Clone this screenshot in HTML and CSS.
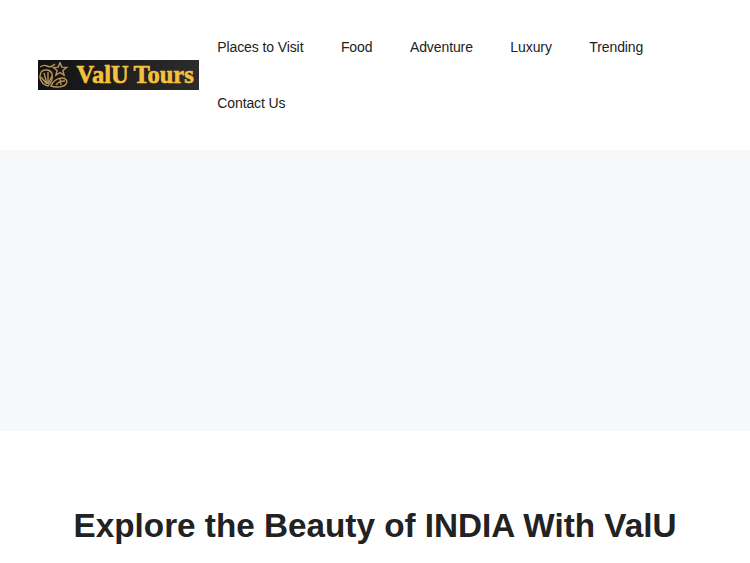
FILE: index.html
```html
<!DOCTYPE html>
<html lang="en">
<head>
    <meta charset="UTF-8">
    <meta name="viewport" content="width=device-width, initial-scale=1.0">
    <title>ValU Tours</title>
    <link rel="stylesheet" href="styles.css">
</head>
<body>
    <header class="site-header">
        <a class="logo" href="#">
            <svg class="logo-icon" width="30" height="26" viewBox="0 0 30 26" fill="none" stroke="#b8935a" stroke-width="1.4">
                <path d="M1 5c3-2 5-2 7-1s5 1 8-2"/>
                <path d="M21 .5l1.800 4.600 4.900.2-3.800 3.100 1.200 4.800-4.100-2.700-4.100 2.700 1.200-4.800-3.800-3.100 4.900-.2z"/>
                <path d="M3 9c4-2 9-1 10 3 1 4-1 9-4 12-4-1-7-4-8-8 0-3 0-5 2-7z"/>
                <path d="M5 11l3 11M9 10l0 12M2 15l6 7M13 14l-4 8"/>
                <path d="M12 24c1-4 6-8 11-8 4 0 6 3 4 6-2 3-10 4-15 2z"/>
                <path d="M17 23c2-3 5-4 9-4M21 17l1 6"/>
            </svg>
            <span class="logo-text">ValU Tours</span>
        </a>
        <nav class="main-nav">
            <a href="#">Places to Visit</a>
            <a href="#">Food</a>
            <a href="#">Adventure</a>
            <a href="#">Luxury</a>
            <a href="#">Trending</a>
            <a href="#">Contact Us</a>
        </nav>
    </header>
    <div class="hero"></div>
    <main class="intro">
        <h1>Explore the Beauty of INDIA With ValU</h1>
    </main>
</body>
</html>
```

FILE: styles.css
```css
* {
    box-sizing: border-box;
}
html, body {
    height: 100%;
}
body {
    margin: 0;
    background-color: #fff;
    color: #222;
    font-family: Helvetica, "Liberation Sans", Arial, sans-serif;
    overflow: hidden;
}
a {
    color: inherit;
    text-decoration: none;
}
.site-header {
    display: flex;
    align-items: center;
    height: 150px;
    padding: 19px 37.5px;
}
.logo {
    flex: none;
    display: flex;
    align-items: center;
    width: 161px;
    height: 30px;
    padding-left: 1.500px;
    background: linear-gradient(90deg, #121212, #2c2c2c);
}
.logo-icon {
    flex: none;
}
.logo-text {
    margin-left: 7.500px;
    font-family: "Liberation Serif", serif;
    font-size: 24.5px;
    line-height: 28px;
    font-weight: 700;
    word-spacing: -1px;
    white-space: nowrap;
    color: #f3c13c;
    -webkit-text-stroke: 0.6px #f3c13c;
}
.main-nav {
    display: flex;
    flex-wrap: wrap;
    width: 500px;
}
.main-nav a {
    padding: 20px 18.75px;
    font-size: 14px;
    line-height: 16px;
    letter-spacing: -0.1px;
}
.hero {
    height: 281px;
    background-color: #f7f8fa;
}
.intro {
    padding-top: 76px;
    text-align: center;
}
h1 {
    margin: 0;
    font-size: 33.28px;
    line-height: 38px;
    font-weight: 700;
}
```
